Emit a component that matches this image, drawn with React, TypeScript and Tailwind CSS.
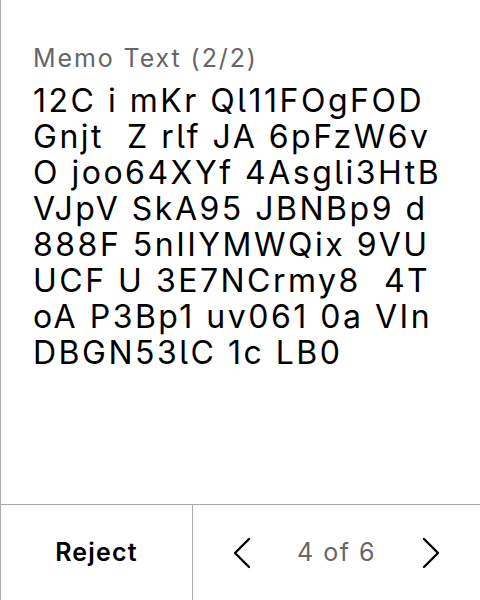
import React from "react";

const lines = [
  "12C i mKr Ql11FOgFOD",
  "Gnjt  Z rlf JA 6pFzW6v",
  "O joo64XYf 4Asgli3HtB",
  "VJpV SkA95 JBNBp9 d",
  "888F 5nIIYMWQix 9VU",
  "UCF U 3E7NCrmy8  4T",
  "oA P3Bp1 uv061 0a VIn",
  "DBGN53lC 1c LB0",
];

function Chevron({ dir }: { dir: "left" | "right" }) {
  return (
    <svg width="18" height="32" viewBox="0 0 18 32" fill="none">
      <path
        d={dir === "left" ? "M16 2 L2 16 L16 30" : "M2 2 L16 16 L2 30"}
        stroke="#000"
        strokeWidth="2.4"
        strokeLinecap="round"
        strokeLinejoin="round"
      />
    </svg>
  );
}

export default function App() {
  return (
    <div
      className="w-[480px] h-[600px] bg-white flex flex-col border-l border-[#a9a9a9] [font-feature-settings:'cv05']"
      style={{ fontFamily: "Inter, 'Noto Sans', sans-serif" }}
    >
      <div className="flex-1 pt-[44px] pl-[32px]">
        <div className="text-[25px] leading-[28px] tracking-[1.9px] text-[#666666]">Memo Text (2/2)</div>
        <div className="mt-[11px] text-[32px] leading-[36px] tracking-[2.5px] text-black whitespace-pre">
          {lines.map((l, i) => (
            <div key={i}>{l}</div>
          ))}
        </div>
      </div>
      <div className="h-[96px] border-t border-[#a9a9a9] flex">
        <div className="w-[192px] border-r border-[#a9a9a9] flex items-center justify-center">
          <span className="text-[25px] font-semibold tracking-[1.2px] text-black">Reject</span>
        </div>
        <div className="flex-1 flex items-center justify-center gap-[46px]">
          <Chevron dir="left" />
          <span className="text-[25px] tracking-[1.5px] text-[#666666]">4 of 6</span>
          <Chevron dir="right" />
        </div>
      </div>
    </div>
  );
}
